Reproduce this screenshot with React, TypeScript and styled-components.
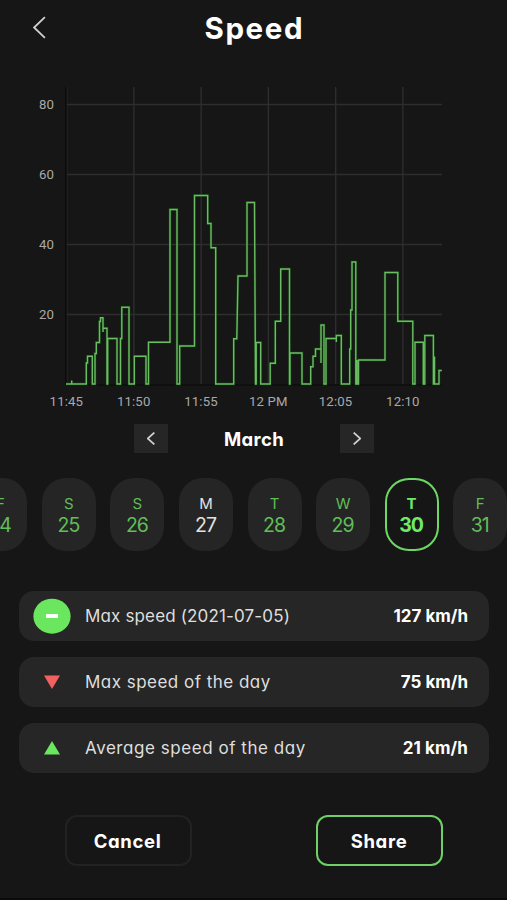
import React from "react";
import styled, { createGlobalStyle } from "styled-components";

const GREEN = "#6be65f";

const GlobalStyle = createGlobalStyle`
  * { box-sizing: border-box; }
  html, body { margin: 0; background: #161616; }
  body { overflow: hidden; font-family: Inter, "Liberation Sans", sans-serif; font-feature-settings: "cv11" 1; color: #fff; }
  button { font: inherit; font-feature-settings: inherit; color: inherit; padding: 0; border: 0; background: none; }
`;

const Screen = styled.main`
  width: 507px;
  height: 900px;
  display: flex;
  flex-direction: column;
  overflow: hidden;
  background: #161616;
  border-bottom: 2px solid #0b0b0b;
`;

const Header = styled.header`
  display: grid;
  grid-template-columns: 79px 1fr 79px;
  align-items: center;
  height: 56px;
  flex: none;
`;

const BackButton = styled.button`
  display: flex;
  justify-content: center;
  height: 24px;
  padding-bottom: 1px;
`;

const Title = styled.h1`
  margin: 0;
  text-align: center;
  font-size: 29.5px;
  line-height: 56px;
  font-weight: 700;
  letter-spacing: 1.6px;
  text-indent: 1.6px;
`;

const Chart = styled.svg`
  display: block;
  flex: none;
  width: 507px;
  height: 368px;
`;

const AxisText = styled.text`
  font-family: Roboto, sans-serif;
  font-size: 13.2px;
  letter-spacing: 0.15px;
  fill: #a9a9a9;
`;

const MonthBar = styled.div`
  display: flex;
  align-items: center;
  justify-content: space-between;
  width: 241px;
  height: 29px;
  margin: 0 0 0 133.5px;
  flex: none;
`;

const MonthButton = styled.button`
  display: flex;
  align-items: center;
  justify-content: center;
  width: 34px;
  height: 29px;
  background: #262626;
`;

const MonthName = styled.span`
  font-size: 18.5px;
  font-weight: 700;
  letter-spacing: 0.35px;
`;

const Days = styled.div`
  display: flex;
  gap: 14.55px;
  margin: 25px 0 0 -26.7px;
  flex: none;
`;

const Day = styled.button<{ $tone: string; $selected?: boolean }>`
  display: flex;
  flex-direction: column;
  align-items: center;
  flex: none;
  width: 54px;
  height: 73px;
  padding-top: 15.5px;
  border-radius: 24px;
  background: ${(p) => (p.$selected ? "#161616" : "#252525")};
  box-shadow: ${(p) => (p.$selected ? `inset 0 0 0 2px #6fd865` : "none")};
  color: ${(p) => p.$tone};
  font-weight: ${(p) => (p.$selected ? 700 : 400)};
`;

const Weekday = styled.span`
  font-size: 15px;
  line-height: 20px;
`;

const DayNumber = styled.span`
  font-size: 19.5px;
  line-height: 23px;
  letter-spacing: -1px;
  margin-left: -1px;
`;

const Stats = styled.section`
  display: flex;
  flex-direction: column;
  gap: 15.5px;
  margin: 39.5px 18px 0 19px;
  flex: none;
`;

const Stat = styled.div`
  display: grid;
  grid-template-columns: 66px 1fr auto;
  align-items: center;
  height: 50.5px;
  padding-right: 21px;
  border-radius: 15px;
  background: #262626;
`;

const StatIcon = styled.svg`
  display: block;
  width: 38px;
  height: 38px;
  margin-left: 14px;
`;

const StatLabel = styled.span<{ $tracking: number }>`
  padding-top: 1px;
  color: #dedede;
  font-size: 17px;
  letter-spacing: ${(p) => p.$tracking}px;
`;

const StatValue = styled.strong<{ $tracking: number }>`
  padding-top: 1px;
  font-size: 17px;
  font-weight: 700;
  letter-spacing: ${(p) => p.$tracking}px;
`;

const Actions = styled.footer`
  display: flex;
  justify-content: space-between;
  margin: 42px 64px 0 64.5px;
  flex: none;
`;

const ActionButton = styled.button<{ $primary?: boolean }>`
  width: 127px;
  height: 51px;
  border: ${(p) => (p.$primary ? "2px solid #70cf67" : "2px solid #222")};
  border-radius: 12px;
  font-size: 18.5px;
  font-weight: 700;
  letter-spacing: 0.65px;
  padding-right: 1px;
`;

const yTicks = [80, 60, 40, 20];
const xTicks = ["11:45", "11:50", "11:55", "12 PM", "12:05", "12:10"];

const SPEED_TRACE =
  "M66 384H71.7V380.5V384H86.3V363H87.5V356.3H92.3V384H95V353.5H96.3V342.5H99.5V321.5H100.5V317.8H103V332V328.3H107V384H107.7V338.5H117V384H120.5V338.5H121.8V307.3H129V384H134.3V356.3H146V384H148.5V342.3H170V209.5H177V384H179.7V346H194.5V195.5H207.7V223.5H211V247.8H215.7V384H233.7V338.8H236.8L238 276H247V202.5H254.5L255.5 384H256.2V342.5H260.7V384H270.2V363.3H275.3V321.3H280.7V269H289.5V384H290V353H302V384H310.7V366.7H313V356.3H315.5V349H321V363V325H324V384H326V338.5H336.3V342V335.5H341.3V384H349.7V349H350.7V310H352V262H355.8V384H357V360V384H358.5V360H385V272.5H397.8V321.3H412.8V384H415V342.3H423.3V384H424.8V335.5H433.4V384H434.5V356.5V384H439V370.5H441.8";

function Chevron({ width, height, right }: { width: number; height: number; right?: boolean }) {
  return (
    <svg width={width} height={height} viewBox="0 0 12 22" preserveAspectRatio="none" fill="none" stroke="#cfcfcf" strokeWidth="1.8">
      <path d={right ? "M1 1L11 11L1 21" : "M11 1L1 11L11 21"} vectorEffect="non-scaling-stroke" />
    </svg>
  );
}

function SpeedChart() {
  return (
    <Chart viewBox="0 56 507 368">
      <g stroke="#2e2e2e" strokeWidth="1.4">
        {yTicks.map((v) => (
          <path key={v} d={`M66 ${384.5 - v * 3.5}H442`} />
        ))}
        {xTicks.slice(1).map((t, i) => (
          <path key={t} d={`M${133.9 + i * 67.25} 87V384`} />
        ))}
      </g>
      <path d="M66 87V385H442" fill="none" stroke="#080808" strokeWidth="1.2" />
      <path d="M67.2 87V383" stroke="#242424" />
      {yTicks.map((v) => (
        <AxisText key={v} x="54" y={389 - v * 3.5} textAnchor="end">{v}</AxisText>
      ))}
      {xTicks.map((t, i) => (
        <AxisText key={t} x={66.4 + i * 67.3} y="406" textAnchor="middle">{t}</AxisText>
      ))}
      <path d={SPEED_TRACE} fill="none" stroke="#123f12" strokeWidth="2.8" opacity="0.75" />
      <path d={SPEED_TRACE} fill="none" stroke="#6bbd63" strokeWidth="1.4" />
    </Chart>
  );
}

const days = [
  { day: "F", date: "24" },
  { day: "S", date: "25" },
  { day: "S", date: "26" },
  { day: "M", date: "27", tone: "#e2e2e2" },
  { day: "T", date: "28" },
  { day: "W", date: "29" },
  { day: "T", date: "30", tone: "#70e967", selected: true },
  { day: "F", date: "31" },
];

const stats = [
  { kind: "same", label: "Max speed (2021-07-05)", value: "127 km/h", tracking: 0.15, valueTracking: 0 },
  { kind: "down", label: "Max speed of the day", value: "75 km/h", tracking: 0.48, valueTracking: 0 },
  { kind: "up", label: "Average speed of the day", value: "21 km/h", tracking: 0.55, valueTracking: 0.1 },
];

function Trend({ kind }: { kind: string }) {
  return (
    <StatIcon viewBox="0 0 38 38">
      {kind === "same" && (
        <>
          <ellipse cx="19" cy="19.2" rx="18.6" ry="17.5" fill={GREEN} />
          <rect x="13" y="17" width="12" height="4" rx="1" fill="#fff" />
        </>
      )}
      {kind === "down" && <path d="M11 12.5H27L19 26Z" fill="#f2605f" />}
      {kind === "up" && <path d="M11 25.5H27L19 12Z" fill={GREEN} />}
    </StatIcon>
  );
}

export default function App() {
  return (
    <>
      <GlobalStyle />
      <Screen>
        <Header>
          <BackButton aria-label="Back"><Chevron width={13} height={23} /></BackButton>
          <Title>Speed</Title>
        </Header>
        <SpeedChart />
        <MonthBar>
          <MonthButton aria-label="Previous month"><Chevron width={8} height={13} /></MonthButton>
          <MonthName>March</MonthName>
          <MonthButton aria-label="Next month"><Chevron width={8} height={13} right /></MonthButton>
        </MonthBar>
        <Days>
          {days.map((d) => (
            <Day key={d.date} $tone={d.tone ?? "#61bd58"} $selected={d.selected}>
              <Weekday>{d.day}</Weekday>
              <DayNumber>{d.date}</DayNumber>
            </Day>
          ))}
        </Days>
        <Stats>
          {stats.map((s) => (
            <Stat key={s.kind}>
              <Trend kind={s.kind} />
              <StatLabel $tracking={s.tracking}>{s.label}</StatLabel>
              <StatValue $tracking={s.valueTracking}>{s.value}</StatValue>
            </Stat>
          ))}
        </Stats>
        <Actions>
          <ActionButton>Cancel</ActionButton>
          <ActionButton $primary>Share</ActionButton>
        </Actions>
      </Screen>
    </>
  );
}
